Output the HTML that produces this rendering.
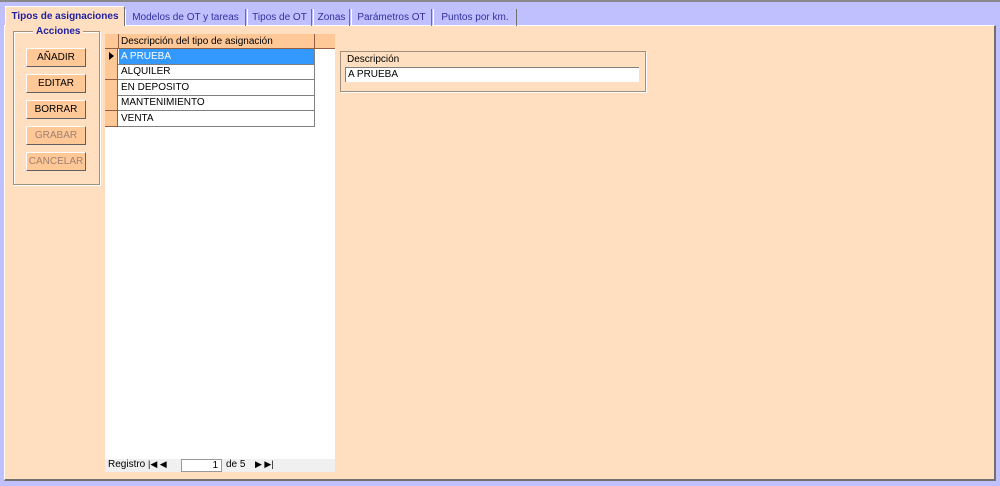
<!DOCTYPE html>
<html><head><style>
*{margin:0;padding:0;box-sizing:border-box}
body{width:1000px;height:486px;background:#c0c0ff;position:relative;overflow:hidden;font-family:"Liberation Sans",sans-serif;font-size:10px;color:#000}
.top{position:absolute;left:0;top:0;width:1000px;height:2px;background:#888}
.page{position:absolute;left:4px;top:25px;width:992px;height:456px;background:#ffdfc0;border-top:1px solid #fff;border-left:1px solid #fff;border-right:2px solid #707070;border-bottom:2px solid #707070}
.tab{position:absolute;top:9px;height:17px;color:#3030a0;font-size:10px;line-height:17px;text-align:center;white-space:nowrap;overflow:hidden;border-left:1px solid #fff;border-right:1px solid #707070}
.tab.act{top:6px;height:20px;background:#ffdfc0;font-weight:bold;color:#2020a0;border-top:1px solid #fff;line-height:20px;z-index:2}
.abs{position:absolute}
.frame{left:13px;top:31px;width:87px;height:154px;border:1px solid #a09080;box-shadow:1px 1px 0 #fff inset,1px 1px 0 #fff}
.lgd{left:33px;top:26px;background:#ffdfc0;padding:0 3px;font-weight:bold;color:#2020a0;font-size:10px}
.btn{left:26px;width:60px;height:19px;background:#ffc896;border-top:1px solid #fff;border-left:1px solid #fff;border-right:1px solid #606060;border-bottom:1px solid #606060;text-align:center;line-height:17px;font-size:10px}
.dis{color:#a08070}
.grid{left:105px;top:34px;width:230px;height:438px;background:#fff}
.hdr{left:105px;top:34px;width:230px;height:15px;background:#ffc896;border-bottom:1px solid #906040}
.row{left:105px;width:210px;height:16px;border-bottom:1px solid #808080}
.sel{width:13px;height:16px;background:#ffc896;border-right:1px solid #906040;border-bottom:1px solid #906040;position:absolute;left:0;top:0}
.txt{position:absolute;left:16px;top:1px;line-height:13px}
.nav{left:105px;top:459px;width:230px;height:13px;background:#f0f0f0;font-size:10px}
</style></head><body>
<div class="top"></div>
<div class="page"></div>
<div class="tab act" style="left:5px;width:120px">Tipos de asignaciones</div>
<div class="tab" style="left:125px;width:121px">Modelos de OT y tareas</div>
<div class="tab" style="left:247px;width:65px">Tipos de OT</div>
<div class="tab" style="left:313px;width:37px">Zonas</div>
<div class="tab" style="left:351px;width:81px">Parámetros OT</div>
<div class="tab" style="left:433px;width:84px">Puntos por km.</div>
<div class="abs frame"></div>
<div class="abs lgd">Acciones</div>
<div class="abs btn" style="top:48px">AÑADIR</div>
<div class="abs btn" style="top:74px">EDITAR</div>
<div class="abs btn" style="top:100px">BORRAR</div>
<div class="abs btn dis" style="top:126px">GRABAR</div>
<div class="abs btn dis" style="top:152px">CANCELAR</div>
<div class="abs grid"></div>
<div class="abs hdr"><div class="abs" style="left:13px;top:0;width:1px;height:15px;background:#906040"></div><div class="abs" style="left:209px;top:0;width:1px;height:15px;background:#906040"></div><div class="txt">Descripción del tipo de asignación</div></div>
<div class="abs row" style="top:49px"><div class="sel"><span style="position:absolute;left:4px;top:3px;border-left:5px solid #000;border-top:4px solid transparent;border-bottom:4px solid transparent"></span></div><div class="abs" style="left:14px;top:0;width:196px;height:15px;background:#3399ff"></div><div class="txt" style="color:#fff">A PRUEBA</div></div>
<div class="abs row" style="top:64px"><div class="sel"></div><div class="txt">ALQUILER</div></div>
<div class="abs row" style="top:80px"><div class="sel"></div><div class="txt">EN DEPOSITO</div></div>
<div class="abs row" style="top:95px"><div class="sel"></div><div class="txt">MANTENIMIENTO</div></div>
<div class="abs row" style="top:111px"><div class="sel"></div><div class="txt">VENTA</div></div>
<div class="abs" style="left:314px;top:49px;width:1px;height:78px;background:#808080"></div>
<div class="abs nav"><span class="abs" style="left:3px;top:0">Registro</span><span class="abs" style="left:43px;top:0;font-size:9px">|◀ ◀</span><div class="abs" style="left:76px;top:0;width:41px;height:13px;background:#fff;border:1px solid #999;text-align:right;padding-right:3px;line-height:11px">1</div><span class="abs" style="left:121px;top:0">de 5</span><span class="abs" style="left:150px;top:0;font-size:9px">▶ ▶|</span></div>
<div class="abs" style="left:340px;top:51px;width:306px;height:41px;border:1px solid #a09080;box-shadow:1px 1px 0 #fff"></div>
<div class="abs" style="left:347px;top:54px">Descripción</div>
<div class="abs" style="left:345px;top:67px;width:294px;height:15px;background:#fff;border-top:1px solid #808080;border-left:1px solid #808080;padding-left:2px;line-height:13px">A PRUEBA</div>
</body></html>
